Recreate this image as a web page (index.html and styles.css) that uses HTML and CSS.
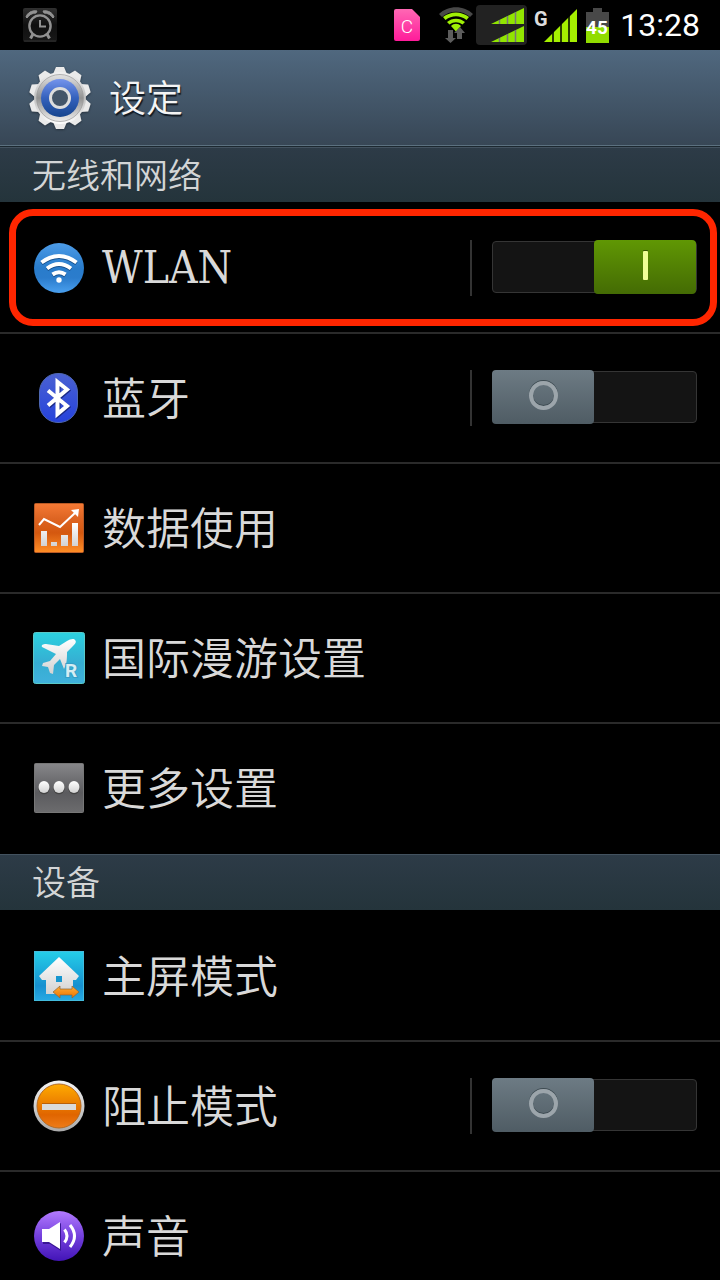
FILE: index.html
```html
<!DOCTYPE html>
<html lang="zh-CN">
<head>
<meta charset="utf-8">
<meta name="viewport" content="width=device-width, initial-scale=1">
<title>设定</title>
<link rel="stylesheet" href="styles.css">
</head>
<body>
<div class="app">
  <div class="status">
    <svg class="status-alarm" width="34" height="34" viewBox="0 0 34 34" aria-hidden="true">
      <defs><linearGradient id="alarmBg" x2="0" y2="1"><stop stop-color="#303030"/><stop offset=".5" stop-color="#101010"/><stop offset="1" stop-color="#181818"/></linearGradient></defs>
      <rect width="34" height="34" rx="2" fill="url(#alarmBg)"/><path d="M1 33h32" stroke="#333"/>
      <g fill="none" stroke="#929292" stroke-width="2.4">
        <circle cx="17" cy="18" r="10.6"/><path d="M17 12v6.500h6" stroke-width="2"/>
        <path d="M10 26l-2.500 4.500M24 26l2.500 4.500" stroke-width="3"/>
      </g>
      <path d="M3 9C4 5 9 2 14 3L13 5C9 5 6 7 4 10ZM31 9C30 5 25 2 20 3l1 2c4 0 7 2 9 5Z" fill="#929292" stroke="#929292"/>
    </svg>
    <div class="status-icons">
      <svg class="status-sim" width="26" height="32" viewBox="0 0 26 32" aria-hidden="true">
        <defs><linearGradient id="sim" x2="0" y2="1"><stop stop-color="#ff68b4"/><stop offset="1" stop-color="#ff1b9a"/></linearGradient></defs>
        <path d="M2 0h16l8 8v22a2 2 0 0 1-2 2H2a2 2 0 0 1-2-2V2a2 2 0 0 1 2-2z" fill="url(#sim)"/>
        <text x="13" y="24" text-anchor="middle" class="icon-text" font-size="19" fill="#fff">C</text>
      </svg>
      <svg class="status-wifi" width="34" height="36" viewBox="0 0 34 36" aria-hidden="true">
        <path d="M0 7C9-2 25-2 34 7l-3 3C23 3 11 3 3 10z" fill="#484848"/>
        <path d="M4 10C12 4 22 4 30 10l-2.500 3C21 8 13 8 6.500 13zM8 15C13 10.500 21 10.500 26 15l-2.500 2.500C19 14.500 15 14.500 10.500 17.500zM12 19c3-3 7-3 10 0l-5 5.500z" fill="#9ff005"/>
        <path d="M9 23h5v8h3l-5.500 5L6 31h3zM18 32v-6h-3l6-6 5 6h-3v6z" fill="#5c5c5c"/>
      </svg>
      <svg class="status-dual" width="51" height="40" viewBox="0 0 51 40" aria-hidden="true">
        <rect width="51" height="40" rx="4" fill="#222"/>
        <path d="M15 19L48 3v16zM15 37L48 21v16z" fill="#91e600"/>
        <path d="M23.500 15v4M31.500 11v8M39.500 7v12M23.500 33v4M31.500 29v8M39.500 25v12" stroke="#777" stroke-width="1.500"/>
      </svg>
      <svg class="status-signal" width="44" height="36" viewBox="0 0 44 36" aria-hidden="true">
        <text x="0" y="19" class="icon-text" font-size="20" font-weight="700" fill="#ddd">G</text>
        <path d="M10 35L43 2v33z" fill="#a5f000"/>
        <path d="M19 24v11M27 16v19M35 8v27" stroke="#000" stroke-width="1.500"/>
      </svg>
      <svg class="status-battery" width="23" height="35" viewBox="0 0 23 35" aria-hidden="true">
        <path d="M7 0h9v4h7v15H0V4h7z" fill="#484848"/><path d="M0 19h23v16H0z" fill="#91dc00"/>
        <text x="11" y="26" text-anchor="middle" class="icon-text" font-size="19" font-weight="700" fill="#fff">45</text>
      </svg>
      <time class="clock" datetime="13:28">13:28</time>
    </div>
  </div>

  <header class="header">
    <svg class="gear" width="62" height="64" viewBox="-31 -32 62 64" aria-hidden="true">
      <defs>
        <linearGradient id="gearMetal" x2="0" y2="1"><stop stop-color="#f1f1f1"/><stop offset=".5" stop-color="#bdbdbd"/><stop offset="1" stop-color="#fff"/></linearGradient>
        <linearGradient id="gearRing" x2="0" y2="1"><stop stop-color="#e4e4e4"/><stop offset=".5" stop-color="#929292"/><stop offset="1" stop-color="#eee"/></linearGradient>
        <linearGradient id="gearBlue" x2="0" y2="1"><stop stop-color="#7594ec"/><stop offset=".5" stop-color="#3461bd"/><stop offset="1" stop-color="#16458e"/></linearGradient>
        <path id="tooth" d="M-7-24L-4-31h8l3 7z"/>
      </defs>
      <g fill="#eaeaea">
        <use href="#tooth"/><use href="#tooth" transform="rotate(36)"/><use href="#tooth" transform="rotate(72)"/><use href="#tooth" transform="rotate(108)"/><use href="#tooth" transform="rotate(144)"/><use href="#tooth" transform="rotate(180)"/><use href="#tooth" transform="rotate(216)"/><use href="#tooth" transform="rotate(252)"/><use href="#tooth" transform="rotate(288)"/><use href="#tooth" transform="rotate(324)"/>
      </g>
      <circle r="26" fill="url(#gearMetal)"/>
      <circle r="23.500" fill="url(#gearRing)" stroke="#999" stroke-width=".7"/>
      <circle r="19" fill="url(#gearBlue)"/>
      <circle r="9.500" fill="#435569" stroke="#ddd" stroke-width="3"/>
    </svg>
    <h1 class="title">设定</h1>
  </header>

  <main class="content">
    <h2 class="section">无线和网络</h2>
    <ul class="list">
      <li class="row">
        <label class="item" for="wlan">
          <svg class="icon" viewBox="0 0 50 50" aria-hidden="true">
            <defs><linearGradient id="wlanBg" x2="0" y2="1"><stop stop-color="#4d9ce8"/><stop offset=".5" stop-color="#297ccb"/><stop offset=".7" stop-color="#2b7ccc"/><stop offset="1" stop-color="#4aa0ef"/></linearGradient></defs>
            <circle cx="25" cy="25" r="25" fill="url(#wlanBg)"/>
            <g fill="none" stroke="#174f8b" stroke-width="4" transform="translate(0 1)"><path d="M7.500 19.500Q25 6.500 42.500 19.500M13 25.500Q25 16.500 37 25.500M18.500 31.500Q25 27 31.500 31.500"/></g>
            <g fill="none" stroke="#fff" stroke-width="4"><path d="M7.500 19.500Q25 6.500 42.500 19.500M13 25.500Q25 16.500 37 25.500M18.500 31.500Q25 27 31.500 31.500"/></g>
            <circle cx="25" cy="37" r="2.700" fill="#fff"/>
          </svg>
          <span class="name name-latin">WLAN</span>
        </label>
        <span class="control"><input class="switch" type="checkbox" role="switch" id="wlan" checked></span>
        <span class="highlight"></span>
      </li>
      <li class="row">
        <label class="item" for="bluetooth">
          <svg class="icon" viewBox="0 0 50 50" aria-hidden="true">
            <defs><linearGradient id="btBg" x2="0" y2="1"><stop stop-color="#4a61d2"/><stop offset="1" stop-color="#2542dc"/></linearGradient></defs>
            <rect x="5.500" y=".5" width="38" height="49" rx="18.500" fill="url(#btBg)" stroke="#4e67b2"/>
            <g fill="none" stroke-width="4"><path d="M14 17.500L33 33 23.500 41V9L33 16.500 14 32.500" stroke="#1b2a86" transform="translate(1 1)"/><path d="M14 17.500L33 33 23.500 41V9L33 16.500 14 32.500" stroke="#fff"/></g>
          </svg>
          <span class="name">蓝牙</span>
        </label>
        <span class="control"><input class="switch" type="checkbox" role="switch" id="bluetooth"></span>
      </li>
      <li class="row">
        <a class="item" href="#data">
          <svg class="icon" viewBox="0 0 50 50" aria-hidden="true">
            <defs><linearGradient id="dataBg" x2="0" y2="1"><stop stop-color="#f57a35"/><stop offset=".3" stop-color="#de6523"/><stop offset=".6" stop-color="#d4580f"/><stop offset="1" stop-color="#ff8f26"/></linearGradient><linearGradient id="white" x2="0" y2="1"><stop stop-color="#fff"/><stop offset="1" stop-color="#d2d2d2"/></linearGradient></defs>
            <rect x=".5" y=".5" width="49" height="49" rx="1" fill="url(#dataBg)" stroke="#b95a25"/>
            <path d="M7 28h6v15H7zM17 39h6v4h-6zM27 32h7v11h-7zM38 20h6v23h-6z" fill="url(#white)"/>
            <path d="M5 22l5-6 16 8L41 10" fill="none" stroke="#fff" stroke-width="2"/><path d="M37 7l8-1-1 8z" fill="#fff"/>
          </svg>
          <span class="name">数据使用</span>
        </a>
      </li>
      <li class="row">
        <a class="item" href="#roaming">
          <svg class="icon" viewBox="0 0 50 50" aria-hidden="true">
            <defs><linearGradient id="planeBg" x2="0" y2="1"><stop stop-color="#2cd2e0"/><stop offset=".6" stop-color="#36add2"/><stop offset="1" stop-color="#40b1dc"/></linearGradient></defs>
            <rect x="-.500" y="-.500" width="51" height="51" rx="2" fill="url(#planeBg)" stroke="#59c9c8"/>
            <path d="M41 7c2 2 0 4-2 6l-6 6c0 6 0 12-3 17l-4-10-6 6-1 9-3-1-2-6-6-1 1-3 7-2 6-7L8 14c-1-2 1-3 4-3l13 2 8-5c3-2 7-3 8-1z" fill="url(#white)"/>
            <text x="37" y="44" text-anchor="middle" class="icon-text" font-size="19" font-weight="700" fill="#d5edf3" stroke="#359fc7" stroke-width="2" paint-order="stroke">R</text>
          </svg>
          <span class="name">国际漫游设置</span>
        </a>
      </li>
      <li class="row row-last">
        <a class="item" href="#more">
          <svg class="icon" viewBox="0 0 50 50" aria-hidden="true">
            <defs><linearGradient id="moreBg" x2="0" y2="1"><stop stop-color="#87878a"/><stop offset=".6" stop-color="#5b5b5e"/><stop offset="1" stop-color="#6c6c6e"/></linearGradient></defs>
            <rect x=".5" y=".5" width="49" height="49" rx="1" fill="url(#moreBg)" stroke="#777"/>
            <g fill="#444"><ellipse cx="10" cy="25" rx="5.800" ry="6.300"/><ellipse cx="25" cy="25" rx="5.800" ry="6.300"/><ellipse cx="40" cy="25" rx="5.800" ry="6.300"/></g>
            <g fill="url(#white)"><ellipse cx="10" cy="24" rx="5.500" ry="6"/><ellipse cx="25" cy="24" rx="5.500" ry="6"/><ellipse cx="40" cy="24" rx="5.500" ry="6"/></g>
          </svg>
          <span class="name">更多设置</span>
        </a>
      </li>
    </ul>

    <h2 class="section">设备</h2>
    <ul class="list list-flush">
      <li class="row">
        <a class="item" href="#home">
          <svg class="icon" viewBox="0 0 50 50" aria-hidden="true">
            <defs><linearGradient id="homeBg" x2="0" y2="1"><stop stop-color="#25cee8"/><stop offset=".7" stop-color="#1690d0"/><stop offset="1" stop-color="#27a9e3"/></linearGradient><linearGradient id="swap" x2="0" y2="1"><stop stop-color="#ffae35"/><stop offset="1" stop-color="#ee7200"/></linearGradient></defs>
            <rect x=".5" y=".5" width="49" height="49" fill="url(#homeBg)" stroke="#43bbdd"/>
            <path d="M25 6l20 19-3 4h-3v14H12V29H8l-3-4z" fill="url(#white)"/>
            <path d="M22 25h6v6h-6z" fill="#1696cf"/>
            <path d="M19 41l7-6v3h12v-3l7 6-7 6v-3H26v3z" fill="url(#swap)" stroke="#8b643b" stroke-width=".7"/>
          </svg>
          <span class="name">主屏模式</span>
        </a>
      </li>
      <li class="row">
        <label class="item" for="blocking">
          <svg class="icon" viewBox="0 0 50 50" aria-hidden="true">
            <defs><linearGradient id="blockRim" x2="0" y2="1"><stop stop-color="#f4f4f4"/><stop offset="1" stop-color="#aaa"/></linearGradient><linearGradient id="blockBg" x2="0" y2="1"><stop stop-color="#ffab00"/><stop offset=".7" stop-color="#e06500"/><stop offset="1" stop-color="#ee7c19"/></linearGradient></defs>
            <circle cx="25" cy="25" r="25.500" fill="url(#blockRim)"/><circle cx="25" cy="25" r="22" fill="url(#blockBg)" stroke="#b76a20"/>
            <path d="M8 22h34v2H8z" fill="#b95f09"/><path d="M8 23h34v6H8z" fill="#dadada"/>
          </svg>
          <span class="name">阻止模式</span>
        </label>
        <span class="control"><input class="switch" type="checkbox" role="switch" id="blocking"></span>
      </li>
      <li class="row">
        <a class="item" href="#sound">
          <svg class="icon" viewBox="0 0 50 50" aria-hidden="true">
            <defs><linearGradient id="soundBg" x2="0" y2="1"><stop stop-color="#b37bff"/><stop offset=".5" stop-color="#7440dd"/><stop offset="1" stop-color="#4214b7"/></linearGradient></defs>
            <circle cx="25" cy="25" r="25" fill="url(#soundBg)"/>
            <g transform="translate(1 1)" fill="#3a1795"><path d="M8 18h7l11-7v28l-11-7H8z"/></g>
            <path d="M8 18h7l11-7v27l-11-7H8z" fill="#fff"/>
            <path d="M30.500 18.500q5 6.500 0 13M36 14q9 11 0 22" fill="none" stroke="#fff" stroke-width="3"/>
          </svg>
          <span class="name">声音</span>
        </a>
      </li>
    </ul>
  </main>
</div>
</body>
</html>
```
FILE: styles.css
```css
*, *::before, *::after { box-sizing: border-box; }

body {
  margin: 0;
  background: #000;
  color: #d9d9d9;
  font-family: "Noto Sans CJK SC", "Noto Sans", sans-serif;
  font-weight: 350;
}

.app {
  display: flex;
  flex-direction: column;
  height: 100vh;
  background: #000;
}

/* Status bar */
.status {
  display: flex;
  flex: none;
  align-items: center;
  justify-content: space-between;
  height: 50px;
  padding: 0 20px 0 23px;
}

.status-icons { display: flex; align-items: center; }
.status-sim { margin-right: 19px; }
.status-wifi { margin-right: 3px; }
.status-dual { margin-right: 7px; }
.status-signal { margin-right: 8px; }
.status-battery { margin-right: 11px; }
.icon-text { font-family: Roboto, sans-serif; }

.clock {
  width: 80px;
  color: #fff;
  font: 400 32px/50px Roboto, sans-serif;
  white-space: nowrap;
  text-align: right;
}

/* Title bar */
.header {
  display: flex;
  flex: none;
  align-items: center;
  gap: 18px;
  height: 97px;
  padding: 0 29px;
  background: linear-gradient(#50687f, #374655);
  border-bottom: 1px solid #1c2830;
  box-shadow: inset 0 -1px #5c7180;
}

.gear { filter: drop-shadow(0 1px 1px #26323e); }

.title {
  margin: 0;
  padding-bottom: 4px;
  color: #f4f4f4;
  font-size: 37px;
  font-weight: 350;
  line-height: 48px;
  text-shadow: 1px 2px 1px #111820;
}

/* Scrolling list */
.content {
  flex: 1;
  min-height: 0;
  overflow-y: auto;
  scrollbar-width: none;
}

.section {
  height: 55px;
  margin: 0;
  padding: 0 32px;
  border-top: 1px solid #43525f;
  background: linear-gradient(#2d3b47, #24343b);
  color: #d3d5d6;
  font-size: 34px;
  font-weight: 350;
  line-height: 52px;
}

.list + .section { height: 56px; }

.list {
  margin: 0;
  padding: 2px 0 0;
  list-style: none;
}

.row {
  position: relative;
  display: flex;
  align-items: center;
  height: 130px;
  padding: 0 23px 0 34px;
  border-bottom: 2px solid #2a2a2a;
}

.row-last { border-bottom-color: transparent; }

.item {
  display: flex;
  flex: 1;
  align-items: center;
  gap: 18px;
  color: inherit;
  text-decoration: none;
}

.icon {
  flex: none;
  width: 50px;
  height: 50px;
  overflow: visible;
}

.name {
  padding-bottom: 4px;
  font-size: 44px;
  line-height: 64px;
  white-space: nowrap;
}

.name-latin {
  padding-bottom: 0;
  font-family: "DejaVu Serif Condensed", "DejaVu Serif", serif;
  font-weight: 400;
}

.control {
  display: flex;
  align-items: center;
  height: 56px;
  padding: 0 0 2px 20px;
  border-left: 2px solid #333;
}

.switch {
  position: relative;
  width: 205px;
  height: 52px;
  margin: 0;
  appearance: none;
  border: 1px solid #353535;
  border-radius: 4px;
  background: #141414;
}

.switch::before {
  content: "";
  position: absolute;
  top: -2px;
  left: -1px;
  width: 102px;
  height: 54px;
  border-radius: 4px;
  background: linear-gradient(#6d7b84, #4f5c64);
}

.switch::after {
  content: "";
  position: absolute;
  top: 9px;
  left: 36px;
  width: 29px;
  height: 29px;
  border: 4px solid #9ca5ab;
  border-radius: 50%;
  box-shadow: 0 -1px #3e4b52, inset 0 -1px #3e4b52;
}

.switch:checked::before {
  left: auto;
  right: 0;
  background: linear-gradient(#609704, #446b04);
}

.switch:checked::after {
  left: auto;
  right: 48px;
  width: 5px;
  border: 0;
  border-radius: 1px;
  background: #f0ff96;
  box-shadow: 0 -1px #375603;
}

.highlight {
  position: absolute;
  inset: 5px 3px 6px 9px;
  border: 7px solid #ff2600;
  border-radius: 24px;
  pointer-events: none;
}
```
